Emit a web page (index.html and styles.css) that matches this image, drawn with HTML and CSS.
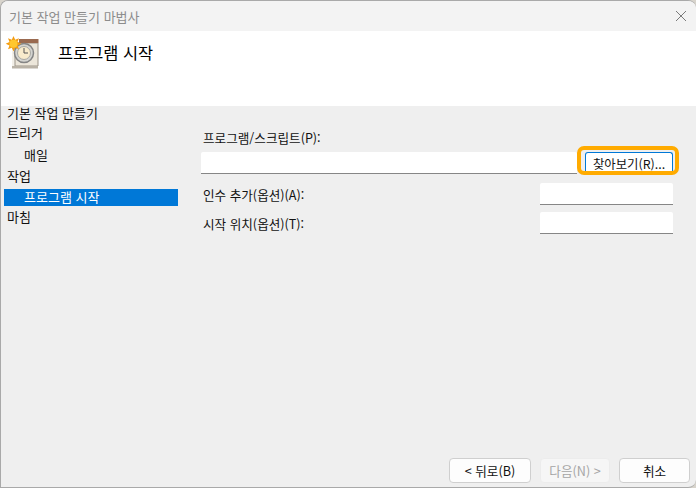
FILE: index.html
```html
<!DOCTYPE html>
<html lang="ko">
<head>
<meta charset="utf-8">
<title>기본 작업 만들기 마법사</title>
<link rel="stylesheet" href="styles.css">
</head>
<body>
<div class="window">
  <div class="titlebar">
    <span class="title">기본 작업 만들기 마법사</span>
    <svg class="close" width="12" height="12" viewBox="0 0 12 12"><path d="M1 1l10 10M11 1L1 11" stroke="#7a7a7a" stroke-width="1" fill="none"/></svg>
  </div>
  <div class="header">
    <svg class="task-icon" width="34" height="34" viewBox="0 0 34 34">
      <path d="M5 5h26v26H5z" fill="#f2efe8"/>
      <path d="M8 6h23v23H8z" fill="#ece6da" stroke="#9c9488"/>
      <path d="M5 29h26v2.500H5z" fill="#b9b2a6"/>
      <path d="M12 2h19.500v4H12z" fill="#9a6a50"/>
      <circle cx="17" cy="16" r="9.500" fill="#d4d4d0" stroke="#858585" stroke-width="1.500"/>
      <circle cx="17" cy="16" r="6.500" fill="#f8ebcc" stroke="#a9a9a4"/>
      <path d="M17 11v5h4" stroke="#555" stroke-width="1" fill="none"/>
      <path d="M6.500 -1l1.700 3.700 3.800-1.500-1.500 3.800 3.800 1.700-3.800 1.700 1.500 3.800-3.800-1.500-1.700 3.700-1.700-3.700-3.800 1.500 1.500-3.800-3.800-1.700 3.800-1.700-1.500-3.800 3.800 1.500z" fill="#f39c12"/>
      <circle cx="6.500" cy="6.700" r="4" fill="#ffc72e"/>
    </svg>
    <h1 class="heading">프로그램 시작</h1>
  </div>
  <div class="main">
    <nav class="nav">
      <div class="nav-item nav-first">기본 작업 만들기</div>
      <div class="nav-item nav-trigger">트리거</div>
      <div class="nav-item nav-sub nav-daily">매일</div>
      <div class="nav-item nav-action">작업</div>
      <div class="nav-item nav-sub nav-selected">프로그램 시작</div>
      <div class="nav-item nav-finish">마침</div>
    </nav>
    <section class="form">
      <label class="label label-program">프로그램/스크립트(P):</label>
      <div class="program-row">
        <div class="input input-program"></div>
        <div class="browse-wrap">
          <button class="btn btn-browse">찾아보기(R)...</button>
          <div class="highlight"></div>
        </div>
      </div>
      <div class="option-row row-args">
        <label class="label">인수 추가(옵션)(A):</label>
        <div class="input input-short"></div>
      </div>
      <div class="option-row row-start">
        <label class="label">시작 위치(옵션)(T):</label>
        <div class="input input-short"></div>
      </div>
    </section>
  </div>
  <div class="footer">
    <button class="btn btn-back">&lt; 뒤로(B)</button>
    <button class="btn btn-next" disabled>다음(N) &gt;</button>
    <button class="btn btn-cancel">취소</button>
  </div>
</div>
</body>
</html>
```
FILE: styles.css
```css
* { box-sizing: border-box; }
html, body { margin: 0; padding: 0; }
body {
  width: 696px;
  height: 488px;
  overflow: hidden;
  background: #d8d4cc;
  font-family: "Noto Sans CJK KR", "Liberation Sans", sans-serif;
  font-size: 12.6px;
  color: #111;
}
.window {
  width: 696px;
  height: 488px;
  display: flex;
  flex-direction: column;
  background: #efefef;
  border: 1px solid #a9a9a9;
  border-width: 1px 0 1px 1px;
  border-radius: 8px 8px 8px 0;
  overflow: hidden;
}
.titlebar {
  height: 30px;
  flex: none;
  display: flex;
  align-items: center;
  justify-content: space-between;
  padding: 0 9px 0 8px;
  background: #f3f3f3;
}
.title { color: #8c8c8c; font-size: 13px; }
.close { flex: none; }
.header {
  height: 75px;
  flex: none;
  display: flex;
  align-items: flex-start;
  background: #fff;
  padding: 6px 0 0 6px;
}
.task-icon { flex: none; overflow: visible; }
.heading {
  margin: 3px 0 0 17px;
  font-size: 16.4px;
  line-height: 24px;
  font-weight: 400;
  color: #000;
}
.main { flex: 1; display: flex; min-height: 0; }
.nav { width: 177px; flex: none; padding-left: 3px; font-size: 13px; }
.nav-item { height: 17px; line-height: 15px; padding-left: 3px; white-space: nowrap; }
.nav-first { margin-top: -1px; }
.nav-trigger { margin-top: 3px; }
.nav-daily { margin-top: 5px; }
.nav-action { margin-top: 4px; }
.nav-sub { padding-left: 20px; }
.nav-selected { margin-top: 4px; background: #0078d7; color: #fff; }
.nav-finish { margin-top: 3px; }
.form { width: 472px; margin-left: 23px; padding-top: 23px; }
.label { display: block; height: 17px; line-height: 17px; padding-left: 2px; white-space: nowrap; }
.program-row { display: flex; margin-top: 6px; }
.input {
  height: 22px;
  background: #fff;
  border-bottom: 1px solid #868686;
  border-radius: 2px 2px 0 0;
}
.input-program { width: 376px; }
.browse-wrap { position: relative; width: 96px; padding-left: 8px; height: 22px; }
.btn {
  font-family: inherit;
  font-size: 12.6px;
  color: #111;
  background: #fdfdfd;
  border: 1px solid #cfcfcf;
  border-radius: 4px;
  padding: 0;
  height: 25px;
}
.btn-browse {
  width: 88px;
  height: 22px;
  line-height: 18px;
  font-size: 12.4px;
  border: 1px solid #0078d7;
  border-bottom: 0;
  border-radius: 3px 3px 0 0;
  background: #fff;
}
.highlight {
  position: absolute;
  left: 0;
  top: -6px;
  width: 102px;
  height: 29px;
  border: 4px solid #ffab00;
  border-radius: 7px;
}
.option-row { display: flex; justify-content: space-between; align-items: center; width: 472px; }
.row-args { margin-top: 9px; }
.row-start { margin-top: 7px; }
.input-short { width: 133px; }
.footer {
  height: 30px;
  flex: none;
  display: flex;
  align-items: flex-end;
  padding-left: 448px;
  margin-bottom: 4px;
}
.btn-back { width: 82px; }
.btn-next { width: 70px; margin-left: 9px; color: #a5a5a5; background: #f6f6f6; border-color: #ececec; }
.btn-cancel { width: 71px; margin-left: 9px; }
```
